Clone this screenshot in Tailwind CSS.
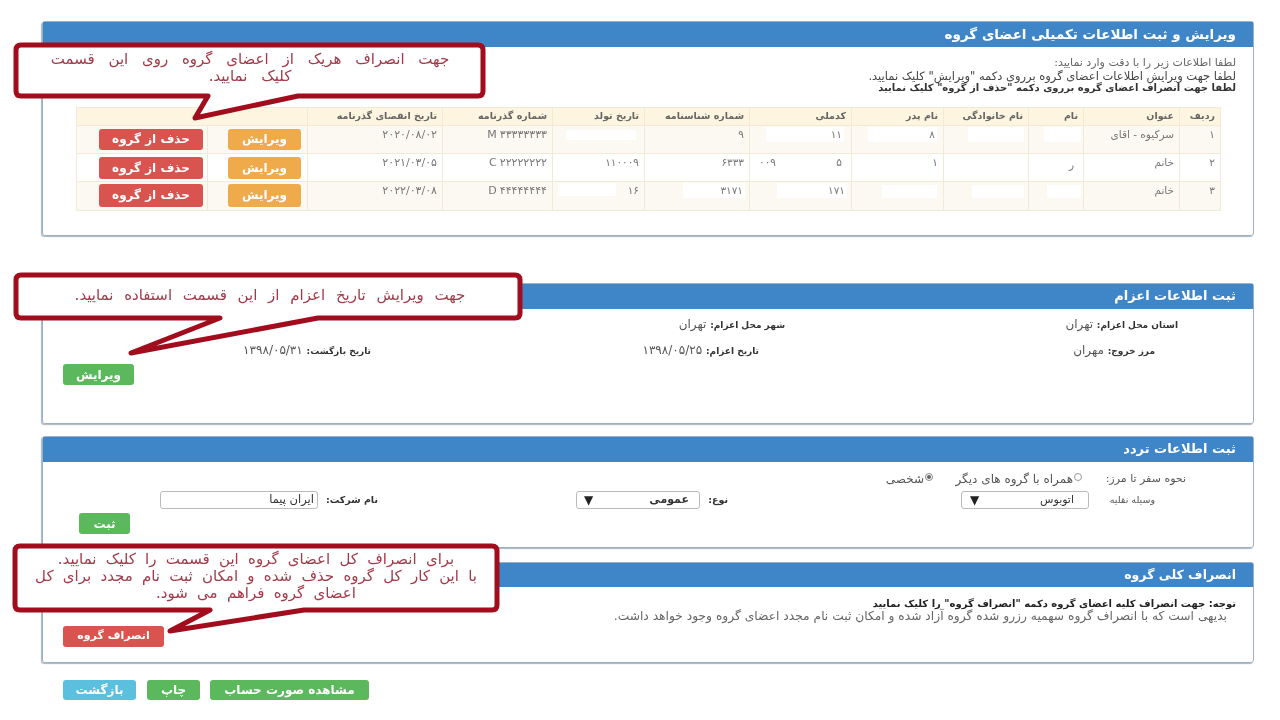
<!DOCTYPE html>
<html lang="fa">
<head>
    <meta charset="UTF-8">
    <title>ویرایش و ثبت اطلاعات</title>
    <script src="https://cdn.jsdelivr.net/npm/@tailwindcss/browser@4"></script>
</head>
<body class="bg-white">
<div class="relative w-[1280px] h-[720px] overflow-hidden bg-white font-['DejaVu_Sans',sans-serif] text-[9px] text-[#555] blur-[0.5px]" dir="rtl">
    <div class="pt-[21px] pl-[42px] pr-[26px] flex flex-col">

        <!-- members -->
        <section class="h-[215px] border border-[#9db0bf] rounded-[3px] shadow-[-1px_1px_1px_#a9b6c0]">
            <h2 class="h-[25px] bg-[#3f86c8] text-white text-[13.5px] font-bold leading-[24px] pr-[17px]">ویرایش و ثبت اطلاعات تکمیلی اعضای گروه</h2>
            <div class="pt-[10px] pr-[17px] leading-[12.5px]">
                <p class="text-[11px] text-[#666]">لطفا اطلاعات زیر را با دقت وارد نمایید:</p>
                <p class="text-[11.5px] text-[#444]">لطفا جهت ویرایش اطلاعات اعضای گروه برروی دکمه "ویرایش" کلیک نمایید.</p>
                <p class="text-[10px] font-bold text-[#333]">لطفا جهت انصراف اعضای گروه برروی دکمه "حذف از گروه" کلیک نمایید</p>
            </div>
            <table class="table-fixed w-[1144px] mt-[12px] mr-[32px] border-collapse text-[10.5px] text-[#777]">
                <colgroup>
                    <col class="w-[41px]"><col class="w-[96px]"><col class="w-[55px]"><col class="w-[85px]"><col class="w-[92px]"><col class="w-[102px]"><col class="w-[105px]"><col class="w-[92px]"><col class="w-[110px]"><col class="w-[135px]"><col class="w-[100px]"><col class="w-[131px]">
                </colgroup>
                <thead>
                    <tr class="h-[18px] bg-[#fdf5df] text-[9.5px] text-[#666]">
                        <th class="border border-[#f1ead6] text-right px-[5px] font-bold">ردیف</th>
                        <th class="border border-[#f1ead6] text-right px-[5px] font-bold">عنوان</th>
                        <th class="border border-[#f1ead6] text-right px-[5px] font-bold">نام</th>
                        <th class="border border-[#f1ead6] text-right px-[5px] font-bold">نام خانوادگی</th>
                        <th class="border border-[#f1ead6] text-right px-[5px] font-bold">نام پدر</th>
                        <th class="border border-[#f1ead6] text-right px-[5px] font-bold">کدملی</th>
                        <th class="border border-[#f1ead6] text-right px-[5px] font-bold">شماره شناسنامه</th>
                        <th class="border border-[#f1ead6] text-right px-[5px] font-bold">تاریخ تولد</th>
                        <th class="border border-[#f1ead6] text-right px-[5px] font-bold">شماره گذرنامه</th>
                        <th class="border border-[#f1ead6] text-right px-[5px] font-bold">تاریخ انقضای گذرنامه</th>
                        <th colspan="2" class="border border-[#f1ead6]"></th>
                    </tr>
                </thead>
                <tbody>
                    <tr class="h-[28px] bg-[#fbf9f1] align-top">
                        <td class="border border-[#f1ead6] px-[5px] pt-[1px]">۱</td>
                        <td class="border border-[#f1ead6] px-[5px] pt-[1px]">سرکیوه - اقای</td>
                        <td class="border border-[#f1ead6] pt-[1px]"><span class="block mr-[2px] w-[37px] h-[15px] bg-white"></span></td>
                        <td class="border border-[#f1ead6] pt-[1px]"><span class="block mr-[4px] w-[56px] h-[15px] bg-white"></span></td>
                        <td class="border border-[#f1ead6] pt-[1px]"><span class="flex mr-[6px] w-[69px] h-[15px] bg-white px-[2px]">۸</span></td>
                        <td class="border border-[#f1ead6] pt-[1px]"><span class="flex mr-[7px] w-[78px] h-[15px] bg-white px-[2px]">۱۱</span></td>
                        <td class="border border-[#f1ead6] pt-[1px]"><span class="block px-[5px]">۹</span></td>
                        <td class="border border-[#f1ead6] pt-[4px]"><span class="block mr-[8px] w-[70px] h-[10px] bg-white"></span></td>
                        <td class="border border-[#f1ead6] px-[5px] pt-[1px] text-right text-[11px] tracking-[3px]" dir="ltr">M۳۳۳۳۳۳۳۳</td>
                        <td class="border border-[#f1ead6] px-[5px] pt-[1px] text-right text-[11px] tracking-[1.5px]" dir="ltr">۲۰۲۰/۰۸/۰۲</td>
                        <td class="border border-[#f1ead6] pr-[6px] pt-[3px]"><button class="block w-[73px] h-[21px] rounded-[3px] bg-[#efaa4b] text-white text-[12px] font-bold">ویرایش</button></td>
                        <td class="border border-[#f1ead6] pr-[4px] pt-[3px]"><button class="block w-[104px] h-[21px] rounded-[3px] bg-[#d9534f] text-white text-[12px] font-bold">حذف از گروه</button></td>
                    </tr>
                    <tr class="h-[28px] bg-white align-top">
                        <td class="border border-[#f1ead6] px-[5px] pt-[1px]">۲</td>
                        <td class="border border-[#f1ead6] px-[5px] pt-[1px]">خانم</td>
                        <td class="border border-[#f1ead6] px-[5px] pt-[3px]"><span class="block pr-[4px]">ر</span></td>
                        <td class="border border-[#f1ead6] px-[5px] pt-[1px]"></td>
                        <td class="border border-[#f1ead6] px-[5px] pt-[1px]">۱</td>
                        <td class="border border-[#f1ead6] px-[5px] pt-[1px]"><span class="flex justify-between"><span class="pr-[4px]">۵</span><span class="pl-[4px]">۰۰۹</span></span></td>
                        <td class="border border-[#f1ead6] px-[5px] pt-[1px]">۶۳۳۳</td>
                        <td class="border border-[#f1ead6] px-[5px] pt-[1px] text-right" dir="ltr">۱۱۰۰۰۹</td>
                        <td class="border border-[#f1ead6] px-[5px] pt-[1px] text-right text-[11px] tracking-[3px]" dir="ltr">C۲۲۲۲۲۲۲۲</td>
                        <td class="border border-[#f1ead6] px-[5px] pt-[1px] text-right text-[11px] tracking-[1.5px]" dir="ltr">۲۰۲۱/۰۳/۰۵</td>
                        <td class="border border-[#f1ead6] pr-[6px] pt-[3px]"><button class="block w-[73px] h-[22px] rounded-[3px] bg-[#efaa4b] text-white text-[12px] font-bold">ویرایش</button></td>
                        <td class="border border-[#f1ead6] pr-[4px] pt-[3px]"><button class="block w-[104px] h-[22px] rounded-[3px] bg-[#d9534f] text-white text-[12px] font-bold">حذف از گروه</button></td>
                    </tr>
                    <tr class="h-[29px] bg-[#fbf9f1] align-top">
                        <td class="border border-[#f1ead6] px-[5px] pt-[1px]">۳</td>
                        <td class="border border-[#f1ead6] px-[5px] pt-[1px]">خانم</td>
                        <td class="border border-[#f1ead6] pt-[3px]"><span class="block mr-[2px] w-[34px] h-[13px] bg-white"></span></td>
                        <td class="border border-[#f1ead6] pt-[3px]"><span class="block mr-[4px] w-[52px] h-[13px] bg-white"></span></td>
                        <td class="border border-[#f1ead6] pt-[3px]"><span class="block mr-[6px] w-[55px] h-[13px] bg-white"></span></td>
                        <td class="border border-[#f1ead6] pt-[1px]"><span class="flex mr-[4px] w-[70px] h-[15px] bg-white px-[2px]">۱۷۱</span></td>
                        <td class="border border-[#f1ead6] pt-[1px]"><span class="flex mr-[4px] w-[62px] h-[15px] bg-white px-[2px]">۳۱۷۱</span></td>
                        <td class="border border-[#f1ead6] px-[5px] pt-[1px]"><span class="flex justify-between"><span>۱۶</span><span class="block w-[58px] h-[13px] bg-white"></span></span></td>
                        <td class="border border-[#f1ead6] px-[5px] pt-[1px] text-right text-[11px] tracking-[3px]" dir="ltr">D۴۴۴۴۴۴۴۴</td>
                        <td class="border border-[#f1ead6] px-[5px] pt-[1px] text-right text-[11px] tracking-[1.5px]" dir="ltr">۲۰۲۲/۰۳/۰۸</td>
                        <td class="border border-[#f1ead6] pr-[6px] pt-[2px]"><button class="block w-[73px] h-[23px] rounded-[3px] bg-[#efaa4b] text-white text-[12px] font-bold">ویرایش</button></td>
                        <td class="border border-[#f1ead6] pr-[4px] pt-[2px]"><button class="block w-[104px] h-[23px] rounded-[3px] bg-[#d9534f] text-white text-[12px] font-bold">حذف از گروه</button></td>
                    </tr>
                </tbody>
            </table>
        </section>

        <!-- dispatch -->
        <section class="mt-[47px] h-[141px] border border-[#9db0bf] rounded-[3px] shadow-[-1px_1px_1px_#a9b6c0]">
            <h2 class="h-[25px] bg-[#3f86c8] text-white text-[13px] font-bold leading-[24px] pr-[17px]">ثبت اطلاعات اعزام</h2>
            <div class="flex pt-[9px] pr-[75px] text-[12px] leading-[13px]">
                <p class="w-[393px]"><b class="text-[9px] text-[#333]">استان محل اعزام:</b> تهران</p>
                <p><b class="text-[9px] text-[#333]">شهر محل اعزام:</b> تهران</p>
            </div>
            <div class="flex pt-[12px] pr-[98px] text-[12px] leading-[13px]">
                <p class="w-[396px]"><b class="text-[9px] text-[#333]">مرز خروج:</b> مهران</p>
                <p class="w-[388px] tracking-[1px]"><b class="text-[9px] text-[#333] tracking-normal">تاریخ اعزام:</b> ۱۳۹۸/۰۵/۲۵</p>
                <p class="tracking-[1px]"><b class="text-[9px] text-[#333] tracking-normal">تاریخ بازگشت:</b> ۱۳۹۸/۰۵/۳۱</p>
            </div>
            <div class="flex justify-end pl-[20px] pt-[6px]">
                <button class="w-[71px] h-[21px] rounded-[3px] bg-[#5cb85c] text-white text-[12px] font-bold">ویرایش</button>
            </div>
        </section>

        <!-- transport -->
        <section class="mt-[12px] h-[112px] border border-[#9db0bf] rounded-[3px] shadow-[-1px_1px_1px_#a9b6c0]">
            <h2 class="h-[25px] bg-[#3f86c8] text-white text-[13px] font-bold leading-[24px] pr-[17px]">ثبت اطلاعات تردد</h2>
            <div class="flex items-center pt-[10px] pr-[67px] text-[11px] leading-[14px]">
                <span class="w-[104px]">نحوه سفر تا مرز:</span>
                <span class="flex items-center gap-[1px] w-[149px] text-[12px]"><span class="size-[8px] rounded-full border border-[#999] bg-white -translate-y-[2px]"></span>همراه با گروه های دیگر</span>
                <span class="flex items-center gap-[1px] text-[12px]"><span class="size-[8px] rounded-full border border-[#888] bg-white flex items-center justify-center -translate-y-[2px]"><span class="size-[4px] rounded-full bg-[#666]"></span></span>شخصی</span>
            </div>
            <div class="flex items-center pt-[5px] pr-[98px] text-[9.5px]">
                <span class="w-[43px] whitespace-nowrap">وسیله نقلیه</span>
                <span class="mr-[23px] w-[128px] h-[18px] border border-[#bbb] rounded-[3px] flex items-center justify-between pr-[14px] pl-[8px] text-[#333] text-[11px]"><span>اتوبوس</span><span class="text-[12px] text-[#222]">▼</span></span>
                <span class="mr-[233px] w-[28px] text-[9.5px] font-bold text-[#333]">نوع:</span>
                <span class="w-[124px] h-[18px] border border-[#bbb] rounded-[3px] flex items-center justify-between pr-[10px] pl-[7px] text-[#333] text-[11px] font-bold"><span>عمومی</span><span class="text-[12px] text-[#222]">▼</span></span>
                <span class="mr-[198px] w-[60px] text-[9.5px] font-bold text-[#333]">نام شرکت:</span>
                <span class="w-[158px] h-[18px] border border-[#bbb] rounded-[3px] flex items-center px-[3px] text-[#333] text-[11.5px]">ایران پیما</span>
            </div>
            <div class="flex justify-end pl-[36px] pt-[4px]">
                <button class="w-[51px] h-[21px] rounded-[3px] bg-[#5cb85c] text-white text-[12px] font-bold">ثبت</button>
            </div>
        </section>

        <!-- cancel -->
        <section class="mt-[14px] h-[101px] border border-[#9db0bf] rounded-[3px] shadow-[-1px_1px_1px_#a9b6c0]">
            <h2 class="h-[24px] bg-[#3f86c8] text-white text-[12.5px] font-bold leading-[23px] pr-[17px]">انصراف کلی گروه</h2>
            <div class="pt-[10px] pr-[17px] leading-[13px]">
                <p class="text-[10px] font-bold text-[#222]">توجه: جهت انصراف کلیه اعضای گروه دکمه "انصراف گروه" را کلیک نمایید</p>
                <p class="pr-[9px] text-[12.25px] text-[#666]">بدیهی است که با انصراف گروه سهمیه رزرو شده گروه آزاد شده و امکان ثبت نام مجدد اعضای گروه وجود خواهد داشت.</p>
            </div>
            <div class="flex justify-end pl-[20px] pt-[3px]">
                <button class="w-[101px] h-[21px] rounded-[3px] bg-[#d9534f] text-white text-[11px] font-bold">انصراف گروه</button>
            </div>
        </section>

        <!-- page actions -->
        <div class="flex justify-end gap-[10px] pl-[21px] mt-[17px]">
            <button class="w-[159px] h-[20px] rounded-[3px] bg-[#5cb85c] text-white text-[12px] font-bold">مشاهده صورت حساب</button>
            <button class="w-[53px] h-[20px] rounded-[3px] bg-[#5cb85c] text-white text-[12px] font-bold">چاپ</button>
            <button class="w-[73px] h-[20px] mr-[1px] rounded-[3px] bg-[#5bc0de] text-white text-[12px] font-bold">بازگشت</button>
        </div>
    </div>

    <!-- red callouts drawn over the page -->
    <svg class="absolute left-0 top-0" width="1280" height="720" viewBox="0 0 1280 720" fill="white" stroke="#a20d1e" stroke-width="5" stroke-linejoin="round">
        <path d="M21 45 H478 Q483 45 483 50 V91 Q483 96 478 96 H298 L195 118 L208 96 H21 Q16 96 16 91 V50 Q16 45 21 45 Z"/>
        <path d="M21 275 H515 Q520 275 520 280 V313 Q520 318 515 318 H318 L131 353 L220 318 H21 Q16 318 16 313 V280 Q16 275 21 275 Z"/>
        <path d="M20 546 H492 Q497 546 497 551 V605 Q497 610 492 610 H304 L170 631 L210 610 H20 Q15 610 15 605 V551 Q15 546 20 546 Z"/>
    </svg>
    <p class="absolute left-[25px] top-[51px] w-[450px] text-center text-[15px] leading-[17px] [word-spacing:9px] text-[#a23a4a]">جهت انصراف هریک از اعضای گروه روی این قسمت<br>کلیک نمایید.</p>
    <p class="absolute left-[30px] top-[286px] w-[480px] text-center text-[15px] leading-[18px] [word-spacing:6px] text-[#a23a4a]">جهت ویرایش تاریخ اعزام از این قسمت استفاده نمایید.</p>
    <p class="absolute left-[10px] top-[551px] w-[492px] text-center text-[15px] leading-[17px] [word-spacing:4.5px] text-[#a23a4a]">برای انصراف کل اعضای گروه این قسمت را کلیک نمایید.<br>با این کار کل گروه حذف شده و امکان ثبت نام مجدد برای کل<br>اعضای گروه فراهم می شود.</p>
</div>
</body>
</html>
